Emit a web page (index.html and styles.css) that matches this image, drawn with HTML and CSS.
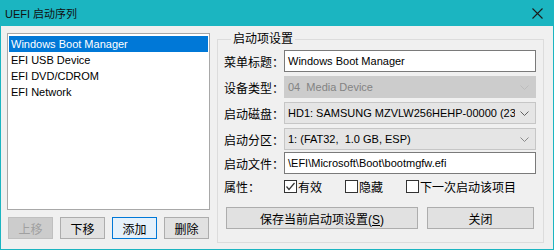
FILE: index.html
```html
<!DOCTYPE html>
<html lang="zh-CN">

<head>
    <meta charset="UTF-8">
    <title>UEFI 启动序列</title>
    <link rel="stylesheet" href="styles.css">
</head>

<body>
    <div class="window">
        <div class="titlebar">
            <span class="title">UEFI 启动序列</span>
            <svg class="close-icon" width="11" height="11" viewBox="0 0 11 11">
                <path d="M0.5 0.5 L10.5 10.5 M10.5 0.5 L0.5 10.5" stroke="#1b1b1b" stroke-width="1.1" fill="none" />
            </svg>
        </div>

        <div class="content">
            <div class="left-panel">
                <ul class="entry-list">
                    <li class="selected">Windows Boot Manager</li>
                    <li>EFI USB Device</li>
                    <li>EFI DVD/CDROM</li>
                    <li>EFI Network</li>
                </ul>
                <div class="list-buttons">
                    <button class="btn" type="button" disabled>上移</button>
                    <button class="btn" type="button">下移</button>
                    <button class="btn btn-default" type="button">添加</button>
                    <button class="btn" type="button">删除</button>
                </div>
            </div>

            <fieldset class="group">
                <legend>启动项设置</legend>

                <div class="field-row">
                    <label>菜单标题：</label>
                    <div class="text-box">Windows Boot Manager</div>
                </div>
                <div class="field-row">
                    <label>设备类型：</label>
                    <div class="combo disabled">
                        <span class="clip">04&nbsp; Media Device</span>
                        <svg class="arrow" width="9" height="5" viewBox="0 0 9 5">
                            <polyline points="0.5,0.5 4.5,4.5 8.5,0.5" fill="none" stroke="#bcbcbc" />
                        </svg>
                    </div>
                </div>
                <div class="field-row">
                    <label>启动磁盘：</label>
                    <div class="combo">
                        <span class="clip">HD1: SAMSUNG MZVLW256HEHP-00000 (238.5 GB)</span>
                        <svg class="arrow" width="9" height="5" viewBox="0 0 9 5">
                            <polyline points="0.5,0.5 4.5,4.5 8.5,0.5" fill="none" stroke="#606060" />
                        </svg>
                    </div>
                </div>
                <div class="field-row">
                    <label>启动分区：</label>
                    <div class="combo">
                        <span class="clip">1: (FAT32,&nbsp; 1.0 GB, ESP)</span>
                        <svg class="arrow" width="9" height="5" viewBox="0 0 9 5">
                            <polyline points="0.5,0.5 4.5,4.5 8.5,0.5" fill="none" stroke="#8a8a8a" />
                        </svg>
                    </div>
                </div>
                <div class="field-row tight">
                    <label>启动文件：</label>
                    <div class="text-box">\EFI\Microsoft\Boot\bootmgfw.efi</div>
                </div>
                <div class="field-row check-row">
                    <label>属性：</label>
                    <span class="check">
                        <svg width="13" height="13" viewBox="0 0 13 13">
                            <rect x="0.5" y="0.5" width="12" height="12" fill="#fff" stroke="#333" />
                            <polyline points="2.5,6.5 5,9.5 10.5,3" fill="none" stroke="#333" stroke-width="1.2" />
                        </svg>有效
                    </span>
                    <span class="check">
                        <svg width="13" height="13" viewBox="0 0 13 13">
                            <rect x="0.5" y="0.5" width="12" height="12" fill="#fff" stroke="#333" />
                        </svg>隐藏
                    </span>
                    <span class="check">
                        <svg width="13" height="13" viewBox="0 0 13 13">
                            <rect x="0.5" y="0.5" width="12" height="12" fill="#fff" stroke="#333" />
                        </svg>下一次启动该项目
                    </span>
                </div>
                <div class="group-buttons">
                    <button class="btn btn-save" type="button">保存当前启动项设置(<u>S</u>)</button>
                    <button class="btn btn-close" type="button">关闭</button>
                </div>
            </fieldset>
        </div>
    </div>
</body>

</html>
```

FILE: styles.css
```css
* {
    box-sizing: border-box;
}

body {
    margin: 0;
    font-family: 'Liberation Sans', 'Noto Sans CJK SC', sans-serif;
    font-size: 12px;
    color: #000;
}

.window {
    width: 554px;
    height: 250px;
    background-color: #f0f0f0;
    border: 1px solid #1bb5c1;
    border-top: none;
    display: flex;
    flex-direction: column;
}

.titlebar {
    height: 26px;
    margin: 0 -1px;
    background-color: #1bb5c1;
    display: flex;
    align-items: center;
    justify-content: space-between;
    padding: 0 11px 0 5px;
}

.title {
    font-size: 11px;
    color: #111;
}

.content {
    flex: 1;
    display: flex;
    gap: 7px;
    padding: 7px 9px 0 6px;
}

.left-panel {
    width: 203px;
    flex-shrink: 0;
    display: flex;
    flex-direction: column;
    gap: 7px;
}

.entry-list {
    list-style: none;
    margin: 0;
    padding: 2px 1px;
    height: 177px;
    font-size: 11px;
    background-color: #fff;
    border: 1px solid #a8a8a8;
}

.entry-list li {
    height: 16px;
    line-height: 16px;
    padding-left: 2px;
}

.entry-list li.selected {
    background-color: #0078d7;
    color: #fff;
}

.list-buttons {
    display: flex;
    gap: 7px;
    padding-left: 1px;
}

.btn {
    font-family: inherit;
    font-size: 12px;
    color: #000;
    height: 22px;
    padding: 0;
    background-color: #e1e1e1;
    border: 1px solid #adadad;
}

.list-buttons .btn {
    width: 45px;
}

.btn:disabled {
    background-color: #cccccc;
    border-color: #bfbfbf;
    color: #a0a0a0;
}

.btn-default {
    background-color: #e5f1fb;
    border-color: #0078d7;
}

.group {
    width: 327px;
    min-width: 0;
    margin: -2px 0 0 0;
    padding: 3px 7px 0 6px;
    height: 212px;
    border: 1px solid #dcdcdc;
    display: flex;
    flex-direction: column;
    gap: 4px;
}

.group legend {
    padding: 0 2px;
    margin-left: 7px;
    line-height: 16px;
}

.field-row {
    display: flex;
    align-items: center;
    height: 22px;
}

.field-row.tight {
    margin-top: -2px;
}

.field-row label {
    width: 60px;
    flex-shrink: 0;
}

.text-box {
    flex: 1;
    min-width: 0;
    height: 22px;
    line-height: 20px;
    padding-left: 3px;
    font-size: 11px;
    background-color: #fff;
    border: 1px solid #7a7a7a;
    white-space: nowrap;
    overflow: hidden;
}

.combo {
    flex: 1;
    min-width: 0;
    height: 22px;
    display: flex;
    align-items: center;
    gap: 5px;
    padding: 0 6px 0 3px;
    font-size: 11px;
    background-color: #e5e5e5;
    border: 1px solid #c6c6c6;
    white-space: nowrap;
}

.combo .clip {
    flex: 1;
    min-width: 0;
    overflow: hidden;
}

.combo .arrow {
    flex-shrink: 0;
}

.combo.disabled {
    background-color: #cccccc;
    border-color: #cccccc;
    color: #838383;
}

.check-row {
    height: 16px;
}

.check {
    display: flex;
    align-items: center;
    flex-shrink: 0;
    white-space: nowrap;
    gap: 1px;
    margin-right: 23px;
}

.check:last-child {
    margin-right: 0;
}

.group-buttons {
    display: flex;
    gap: 9px;
    margin-top: 9px;
    padding-left: 2px;
}

.btn-save {
    width: 192px;
}

.btn-close {
    width: 107px;
}
```
